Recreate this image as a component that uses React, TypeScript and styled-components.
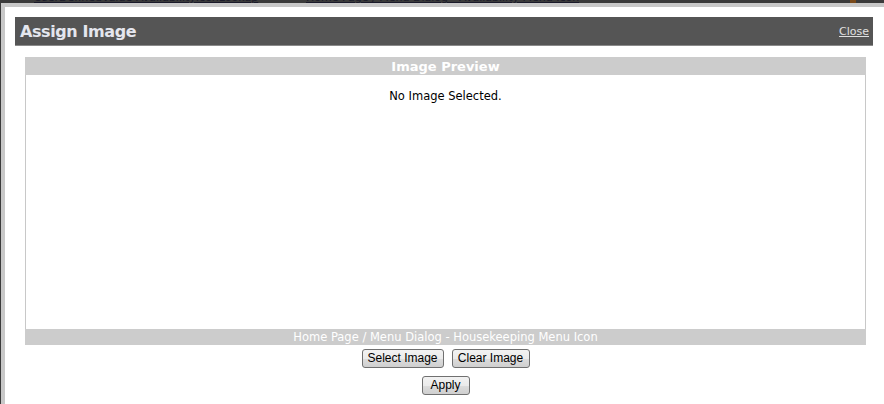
import React from "react";
import styled, { createGlobalStyle } from "styled-components";

const Global = createGlobalStyle`
  html, body { margin: 0; padding: 0; background: #3b3b3b; }
  body { font-family: "DejaVu Sans", Verdana, sans-serif; overflow: hidden; }
  #root { width: 884px; height: 404px; display: flex; flex-direction: column; }
`;

const BackStrip = styled.div`
  height: 3px;
  overflow: hidden;
  position: relative;
  background: #3b3b3b;
  flex: none;
`;

const BackText = styled.span<{ $left: number }>`
  position: absolute;
  top: -9px;
  left: ${(p) => p.$left}px;
  font-size: 11px;
  color: #1a1a2a;
  text-decoration: underline;
  white-space: nowrap;
`;

const BackIcon = styled.span`
  position: absolute;
  top: -6px;
  left: 850px;
  width: 6px;
  height: 10px;
  background: #7a4a1a;
`;

const Dialog = styled.div`
  flex: 1;
  margin-left: 1px;
  border-top: 4px solid #c8c8c8;
  border-left: 4px solid #c8c8c8;
  background: #ffffff;
  padding: 10px 0 0 10px;
  display: flex;
  flex-direction: column;
  align-items: flex-start;
`;

const TitleBar = styled.div`
  width: 858px;
  height: 29px;
  box-sizing: border-box;
  background: #555555;
  border-bottom: 1px solid #8a8a8a;
  display: flex;
  align-items: center;
  justify-content: space-between;
  padding: 0 4px 0 5px;
`;

const Title = styled.h1`
  margin: 0;
  font-family: "DejaVu Sans", Verdana, sans-serif;
  font-weight: bold;
  font-size: 16px;
  letter-spacing: -0.4px;
  color: #e4e6ee;
`;

const CloseLink = styled.a`
  font-family: "DejaVu Sans", Verdana, sans-serif;
  font-size: 11px;
  color: #e0e0e0;
  text-decoration: underline;
  cursor: pointer;
`;

const Preview = styled.div`
  margin: 11px 0 0 10px;
  width: 841px;
  display: flex;
  flex-direction: column;
`;

const PanelBand = styled.div<{ $h: number; $bold?: boolean; $size: number }>`
  height: ${(p) => p.$h}px;
  background: #cccccc;
  color: #ffffff;
  font-size: ${(p) => p.$size}px;
  font-weight: ${(p) => (p.$bold ? "bold" : "normal")};
  display: flex;
  align-items: center;
  justify-content: center;
  white-space: nowrap;
`;

const PreviewBody = styled.div`
  height: 254px;
  box-sizing: border-box;
  border-left: 1px solid #c8c8c8;
  border-right: 1px solid #c8c8c8;
  background: #fff;
  padding-top: 14px;
  text-align: center;
  font-size: 11.5px;
  color: #000;
`;

const ButtonRow = styled.div<{ $top: number }>`
  display: flex;
  justify-content: center;
  gap: 8px;
  margin-top: ${(p) => p.$top}px;
`;

const Button = styled.button<{ $w: number }>`
  width: ${(p) => p.$w}px;
  height: 19px;
  padding: 0;
  border: 1px solid #707070;
  border-radius: 3px;
  background: linear-gradient(#f2f2f2 0%, #ebebeb 50%, #dddddd 50%, #cfcfcf 100%);
  font-family: "Liberation Sans", Arial, sans-serif;
  font-size: 12px;
  color: #000;
  line-height: 17px;
  cursor: pointer;
`;

export default function App() {
  return (
    <>
      <Global />
      <BackStrip>
        <BackText $left={34}>UserDefinedValue-AvailabilityIconLookup</BackText>
        <BackText $left={306}>Home Page / Menu Dialog - Availability Menu Icon</BackText>
        <BackIcon />
      </BackStrip>
      <Dialog>
        <TitleBar>
          <Title>Assign Image</Title>
          <CloseLink>Close</CloseLink>
        </TitleBar>
        <Preview>
          <PanelBand $h={18} $bold $size={13}>Image Preview</PanelBand>
          <PreviewBody>No Image Selected.</PreviewBody>
          <PanelBand $h={16} $size={11.5}>Home Page / Menu Dialog - Housekeeping Menu Icon</PanelBand>
          <ButtonRow $top={4}>
            <Button $w={82}>Select Image</Button>
            <Button $w={78}>Clear Image</Button>
          </ButtonRow>
          <ButtonRow $top={8}>
            <Button $w={48}>Apply</Button>
          </ButtonRow>
        </Preview>
      </Dialog>
    </>
  );
}
